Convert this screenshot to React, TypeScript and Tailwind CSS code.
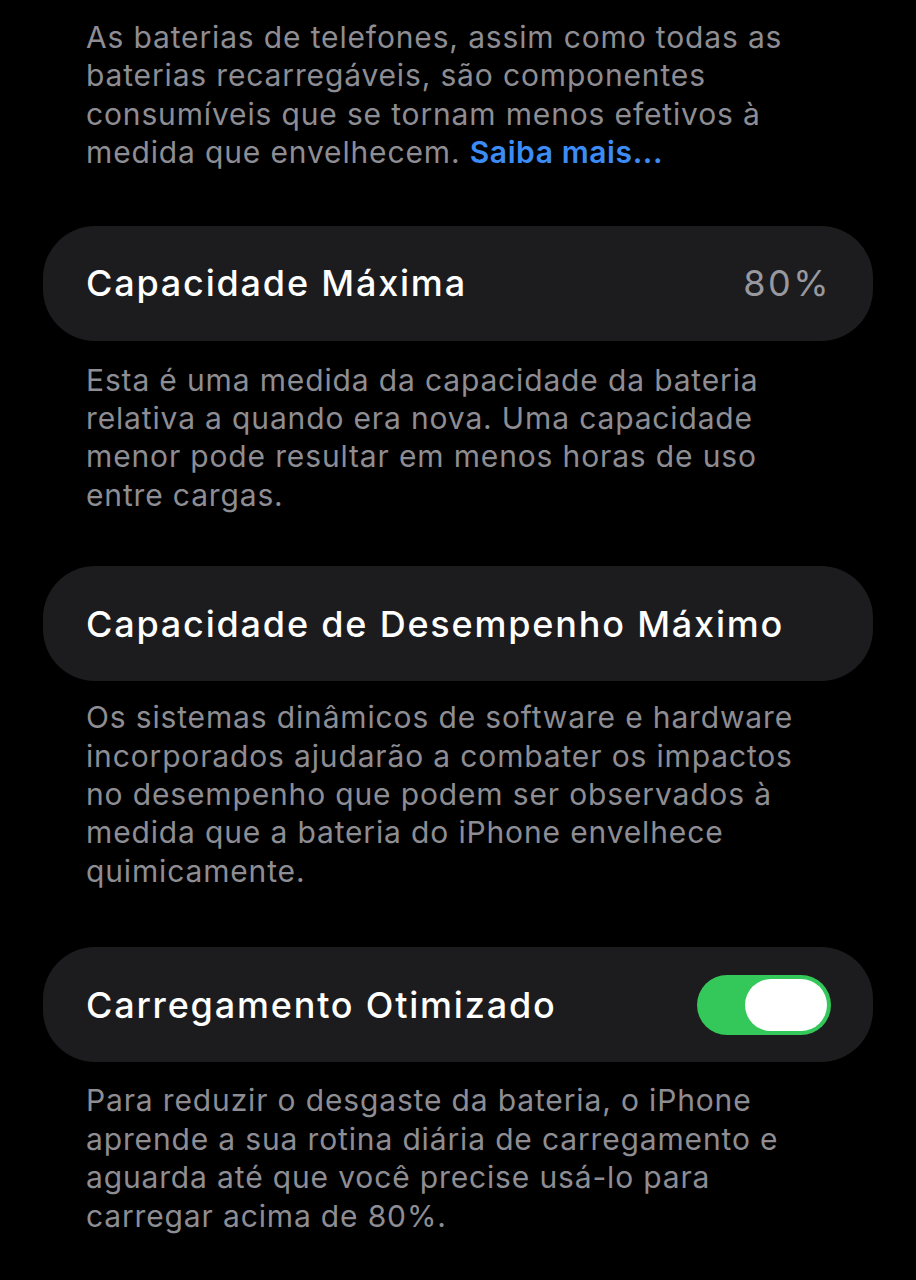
import React from 'react';

const font = { fontFamily: 'Inter, "Noto Sans", sans-serif' };

const Footnote = ({ children }: { children: React.ReactNode }) => (
    <p className="pl-[86px] pr-[84px] text-[30px] leading-[38.4px] text-[#8d8d93] tracking-[0.85px]">
        {children}
    </p>
);

const Card = ({ children }: { children: React.ReactNode }) => (
    <div className="mx-[43px] h-[115px] rounded-[52px] bg-[#1c1c1e] flex items-center justify-between pl-[43px] pr-[42px]">
        {children}
    </div>
);

const Toggle = () => (
    <div className="w-[134px] h-[60px] rounded-full bg-[#34c759] p-[4px] flex justify-end">
        <div className="w-[82px] h-[52px] rounded-full bg-white" />
    </div>
);

export default function App() {
    return (
        <div className="w-[916px] h-[1280px] bg-black overflow-hidden pt-[18px]" style={font}>
            <Footnote>
                As baterias de telefones, assim como todas as baterias recarregáveis, são componentes
                consumíveis que se tornam menos efetivos à medida que envelhecem.{' '}
                <span className="text-[#3b8cf5] font-semibold tracking-[0.6px]">Saiba mais...</span>
            </Footnote>

            <div className="mt-[54px]">
                <Card>
                    <span className="text-[36px] font-medium text-white tracking-[1.8px]">Capacidade Máxima</span>
                    <span className="text-[36px] text-[#98989f] tracking-[2.5px]">80%</span>
                </Card>
            </div>

            <div className="mt-[20px]">
                <Footnote>
                    Esta é uma medida da capacidade da bateria relativa a quando era nova. Uma capacidade
                    menor pode resultar em menos horas de uso entre cargas.
                </Footnote>
            </div>

            <div className="mt-[52px]">
                <Card>
                    <span className="text-[36px] font-medium text-white tracking-[1.8px]">
                        Capacidade de Desempenho Máximo
                    </span>
                </Card>
            </div>

            <div className="mt-[17px]">
                <Footnote>
                    Os sistemas dinâmicos de software e hardware incorporados ajudarão a combater os impactos
                    no desempenho que podem ser observados à medida que a bateria do iPhone envelhece
                    quimicamente.
                </Footnote>
            </div>

            <div className="mt-[57px]">
                <Card>
                    <span className="text-[36px] font-medium text-white tracking-[1.8px]">Carregamento Otimizado</span>
                    <Toggle />
                </Card>
            </div>

            <div className="mt-[19px]">
                <Footnote>
                    Para reduzir o desgaste da bateria, o iPhone aprende a sua rotina diária de carregamento e
                    aguarda até que você precise usá-lo para carregar acima de 80%.
                </Footnote>
            </div>
        </div>
    );
}
